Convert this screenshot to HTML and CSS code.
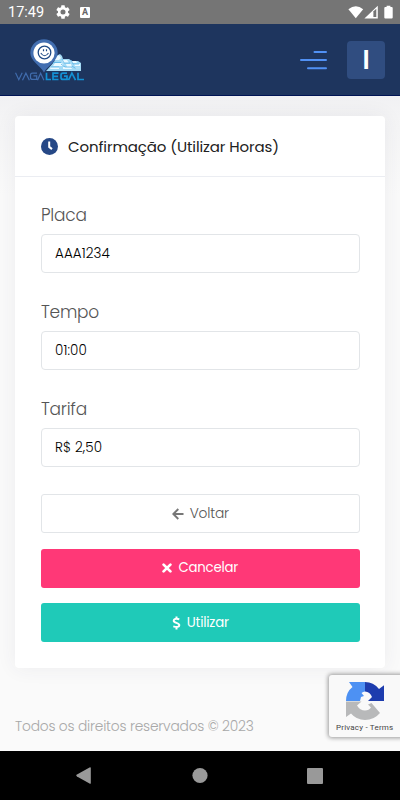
FILE: index.html
```html
<!DOCTYPE html>
<html lang="pt-BR">
<head>
<meta charset="utf-8">
<meta name="viewport" content="width=device-width, initial-scale=1">
<title>Vaga Legal</title>
<link rel="stylesheet" href="styles.css">
</head>
<body>
<div class="statusbar">
  <span class="clock">17:49</span>
  <svg class="gear" width="14" height="14" viewBox="2 2 20 20"><path fill="#fff" d="M19.14 12.94c.04-.3.06-.61.06-.94s-.02-.64-.07-.94l2.03-1.58a.49.49 0 0 0 .12-.61l-1.92-3.32a.49.49 0 0 0-.59-.22l-2.39.96a7 7 0 0 0-1.62-.94l-.36-2.54a.48.48 0 0 0-.48-.41h-3.84a.47.47 0 0 0-.47.41l-.36 2.54c-.59.24-1.13.57-1.62.94l-2.39-.96a.47.47 0 0 0-.59.22L2.74 8.87a.47.47 0 0 0 .12.61l2.03 1.58a6 6 0 0 0 0 1.88l-2.03 1.58a.49.49 0 0 0-.12.61l1.92 3.32c.12.22.37.29.59.22l2.39-.96c.5.38 1.03.7 1.62.94l.36 2.54c.05.24.24.41.48.41h3.84c.24 0 .44-.17.47-.41l.36-2.54a7 7 0 0 0 1.62-.94l2.39.96c.22.08.47 0 .59-.22l1.92-3.32a.47.47 0 0 0-.12-.61zM12 15.6a3.6 3.6 0 1 1 0-7.2 3.6 3.6 0 0 1 0 7.2z"/></svg>
  <span class="a-badge">A</span>
  <svg class="signals" width="46" height="15" viewBox="0 0 46 15" fill="#fff"><path d="M.4 4.2Q7.800-1.500 15.200 4.200L7.800 13.200z"/><path fill-rule="evenodd" d="M29.800.8v12.600H16.400zM25 6.700v5.200h3.300V3.700z"/><path fill="#aaa" d="M25 6.700h1v5.200h-1z"/><path d="M38.600.8h3.800v1.300h1.300q1 0 1 1v9.300q0 1-1 1h-6.400q-1 0-1-1V3.100q0-1 1-1h1.300z"/></svg>
</div>
<header class="topbar">
  <svg class="logo" width="70" height="44" viewBox="0 0 70 44" role="img" aria-label="Vaga Legal">
    <path fill="#a3daf5" d="M32 31l7-8 2-6 4-2 2 2 1 3h6l3 2h6l3 2v8H31z"/>
    <g fill="#edfaff"><path d="M41 18l3-2 2 3-2 2h-5zM47 21h5l2 3h-6zM56 22h5l1 2h-5zM40 24h7l2 3H38zM51 25h5l1 3h-5zM59 25h6v2h-5zM36 28h8v2h-9zM48 28h8l1 2h-9zM60 28h5v2h-4z"/></g>
    <path fill="none" stroke="#57b2e6" stroke-width=".8" d="M38 23.500h8M47 20l2 4h6M56 21l2 4h6M46 25l4 3h7M36 28h8M57 27l3 2h5"/>
    <path fill="#426eb0" d="M29 33.500C25 26 15.300 22 15.300 14a13.700 13.700 0 0 1 27.400 0C42.700 22 33 26 29 33.500z"/>
    <circle cx="29" cy="14" r="10.600" fill="#fff"/>
    <g fill="none" stroke="#1f4a85"><circle cx="29.500" cy="13.500" r="6.300" stroke-width="1.300"/><path stroke-width="1.100" d="M25.800 14q3.700 5.500 7.700 0"/></g>
    <path stroke="#1f4a85" stroke-width="1.200" d="M28.500 10.200v2M31.500 10.200v2"/>
    <g fill="none" stroke-width="1.200"><path stroke="#406cad" d="M.5 33.700l3.300 7 3.400-7M7.500 41.200l3.400-7 3.500 7M22 34.200h-4.500q-2 0-2 2v2.200q0 2 2 2h4.200v-3.500H18.500M22.500 41.200l3.100-7 3.300 7"/><path stroke="#1391d4" stroke-width="1.700" d="M31.500 33.700v6.800h4.500M43.500 34.200h-5.500v6.300h5.500M38 37.300h5M52 34.200h-4q-2 0-2 2v2.200q0 2 2 2h4v-3.300h-3M53.500 41.200l3.400-7 3.600 7M63 33.700v6.800h6"/></g>
  </svg>
  <svg class="menu" width="27" height="20" viewBox="0 0 27 20"><g fill="#5191f5"><rect x="13.500" y="1" width="13.500" height="2" rx="1"/><rect x="0" y="9" width="27" height="2" rx="1"/><rect x="7" y="17.200" width="20" height="2" rx="1"/></g></svg>
  <div class="avatar"><span>I</span></div>
</header>
<main class="page">
  <section class="card">
    <div class="card-head">
      <svg width="17" height="17" viewBox="0 0 17 17"><circle cx="8.500" cy="8.500" r="8.500" fill="#264886"/><path d="M8.200 3.500v5.400l2.800 2.200" fill="none" stroke="#fff" stroke-width="2"/></svg>
      <h1>Confirmação (Utilizar Horas)</h1>
    </div>
    <div class="card-body">
      <div class="field"><label>Placa</label><div class="input">AAA1234</div></div>
      <div class="field"><label>Tempo</label><div class="input">01:00</div></div>
      <div class="field"><label>Tarifa</label><div class="input">R$ 2,50</div></div>
      <div class="buttons">
        <div class="btn back"><svg width="12" height="12" viewBox="0 0 12 12"><path d="M6.300 1L1.300 6l5 5M1.500 6H11.500" fill="none" stroke="#777" stroke-width="1.900"/></svg><span>Voltar</span></div>
        <div class="btn cancel"><svg width="10" height="10" viewBox="0 0 10 10"><path d="M1.600 1.600l6.800 6.800M8.400 1.600L1.600 8.400" stroke="#fff" stroke-width="2.700" stroke-linecap="round"/></svg><span>Cancelar</span></div>
        <div class="btn use"><svg width="9" height="14" viewBox="0 0 9 14"><path d="M7.300 3.200Q1.800 1.900 1.700 4.700C1.700 7.200 7.300 6.500 7.300 9.100Q7.200 12 1.300 10.400M4.500.5v2.400M4.500 11v2.500" fill="none" stroke="#fff" stroke-width="2"/></svg><span>Utilizar</span></div>
      </div>
    </div>
  </section>
  <footer>Todos os direitos reservados © 2023</footer>
</main>
<div class="captcha">
  <svg width="38" height="38" viewBox="0 0 38 38"><path fill="#4d91f3" d="M19 0v9.500q-2 0-3.500 1.500l2.500 3-3 1-1 4H0Q0 10 6.500 5L3 0z"/><path fill="#1d3cae" d="M19 0q8.500 0 14 7L38 3.300V19H22l4-4q-2-5.200-7-5.500z"/><path fill="#b8b9ba" d="M0 19.500h15.500l-4.500 4q3 5 8 5 4 0 6-3l-3-3 3.500-1.500L34 31q-6 7-15 7-8.500 0-14-6.500L0 35z"/></svg>
  <span class="terms">Privacy - Terms</span>
</div>
<nav class="navbar">
  <svg width="400" height="49" viewBox="0 0 400 49" fill="#999"><path d="M77 23.400l12.500-7q1.300-.6 1.300.7v14.800q0 1.300-1.300.7L77 25.600q-1.800-1.100 0-2.200z"/><circle cx="200" cy="24.500" r="7.600"/><rect x="307" y="17" width="16" height="16" rx="1"/></svg>
</nav>
</body>
</html>
```
FILE: styles.css
```css
* { box-sizing: border-box; }
body { margin: 0; width: 400px; height: 800px; overflow: hidden; display: flex; flex-direction: column; background: #fafafa; font-family: Poppins, Inter, "Liberation Sans", sans-serif; font-weight: 300; }
svg { display: block; flex: none; }
.statusbar { height: 24px; flex: none; background: #757575; display: flex; align-items: center; padding: 0 6px 0 8px; color: #fff; }
.clock { width: 36px; height: 22px; font: 400 14.500px/24px Roboto, sans-serif; white-space: nowrap; }
.gear { margin-left: 12px; }
.a-badge { margin-left: 10px; width: 10px; height: 11px; border-radius: 1px; background: #fff; color: #666; font: 700 9px/11px Roboto, sans-serif; text-align: center; }
.signals { margin-left: auto; }
.topbar { height: 72px; flex: none; background: #1e355e; border-bottom: 1px solid #001454; display: flex; align-items: center; padding: 0 15px; }
.logo { margin-top: 2px; }
.menu { margin-left: auto; }
.avatar { margin-left: 20px; width: 38px; height: 38px; border-radius: 4px; background: #304d80; display: grid; place-items: center; color: #fff; font-size: 26px; font-weight: 600; }
.page { flex: 1; padding: 20px 15px 0; min-height: 0; background: linear-gradient(#f1f1f3, #f4f4f5 20px, #fafafa 100px); }
.card { height: 552px; background: #fff; border-radius: 4px; box-shadow: 0 0 20px rgba(60, 60, 80, .07); }
.card-head { height: 61px; border-bottom: 1px solid #ebedf2; display: flex; align-items: center; gap: 10px; padding: 0 26px; }
h1 { margin: 0; font-size: 15px; letter-spacing: -.1px; font-weight: 400; color: #212121; white-space: nowrap; }
.card-body { padding: 26px 25.500px 0 26px; display: flex; flex-direction: column; }
.field { height: 97px; }
label { display: block; height: 31px; line-height: 25px; font-size: 17px; letter-spacing: -.25px; color: #555; }
.input { height: 39px; border: 1px solid #e2e5e8; border-radius: 4px; padding: 0 13px; font-size: 13.500px; letter-spacing: .1px; line-height: 38px; color: #000; }
.buttons { display: flex; flex-direction: column; gap: 15.600px; }
.btn { height: 39px; border-radius: 3px; display: flex; align-items: center; justify-content: center; gap: 6px; color: #fff; font-size: 13.800px; letter-spacing: -.2px; }
.back { border: 1px solid #e2e5e8; color: #555; }
.cancel { background: #ff3877; }
.use { background: #1fcab8; }
.cancel, .use { font-weight: 400; font-size: 13.300px; }
span { white-space: nowrap; }
footer { margin-top: 49px; font-size: 13.800px; letter-spacing: -.2px; line-height: 20px; color: #a8a8a8; }
.captcha { position: absolute; left: 329px; top: 675px; width: 75px; height: 62px; border-radius: 3px; background: #f9f9f9; box-shadow: 0 0 4px 1px #999; padding: 7px 0 0 7px; }
.captcha svg { margin-left: 10px; }
.terms { display: block; margin-top: 2px; font: 400 8px/12px Roboto, sans-serif; letter-spacing: .2px; color: #444; }
.navbar { height: 49px; flex: none; background: #000; }
```
